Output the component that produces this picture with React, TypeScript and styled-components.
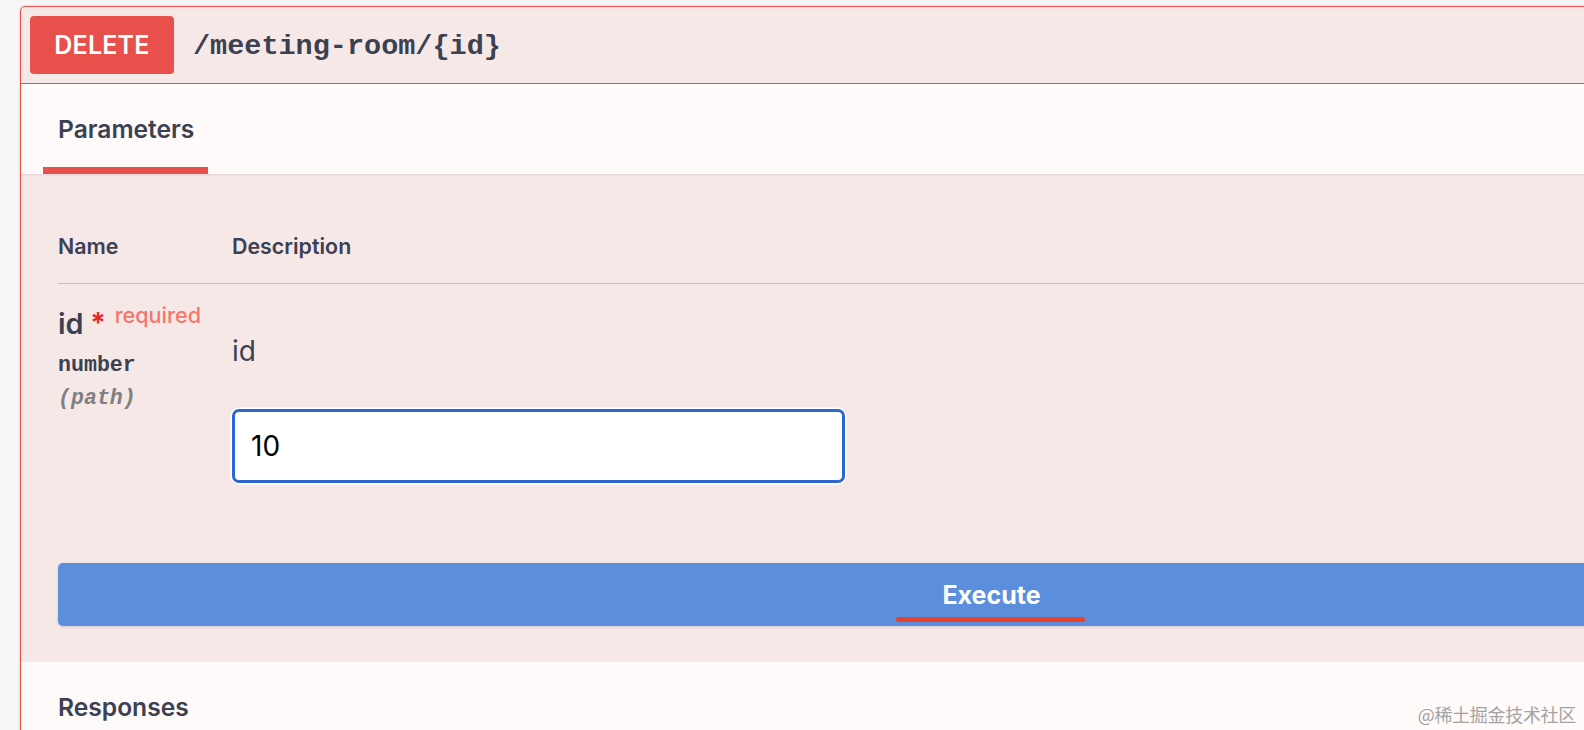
import React from "react";
import styled, { createGlobalStyle } from "styled-components";

const GlobalStyle = createGlobalStyle`
  html, body {
    margin: 0;
    padding: 0;
    background: #f7f7f7;
  }
  body {
    font-family: Inter, "Liberation Sans", Arial, sans-serif;
    color: #3b4151;
  }
  * { box-sizing: border-box; }
`;

const Page = styled.div`
  position: relative;
  width: 1584px;
  height: 730px;
  overflow: hidden;
  padding: 6px 0 0 20px;
  background: #f7f7f7;
`;

const Card = styled.section`
  width: 1942px;
  border: 1px solid #ee4f48;
  border-radius: 5px;
  background: #f7e8e8;
  box-shadow: 0 0 3px rgba(0, 0, 0, 0.19);
  overflow: hidden;
`;

const Summary = styled.header`
  display: flex;
  align-items: center;
  height: 77px;
  padding: 0 9px;
  border-bottom: 1px solid #ee4f48;
`;

const MethodBadge = styled.span`
  display: flex;
  align-items: center;
  justify-content: center;
  width: 144px;
  height: 58px;
  border-radius: 4px;
  background: #e8514b;
  color: #fff;
  font-size: 25px;
  font-weight: 600;
  letter-spacing: 0.2px;
`;

const PathText = styled.span`
  margin-left: 19px;
  font-family: "Liberation Mono", "Courier New", monospace;
  font-weight: 700;
  font-size: 28.5px;
  color: #3b4151;
  padding-top: 2px;
`;

const SectionHeader = styled.div`
  display: flex;
  height: 90px;
  padding-left: 22px;
  background: #fefaf9;
  box-shadow: 0 1px 2px rgba(0, 0, 0, 0.1);
  position: relative;
`;

const Tab = styled.div<{ $active?: boolean }>`
  padding: 30px 14px 0 15px;
  font-size: 24.6px;
  line-height: 30px;
  font-weight: 600;
  color: #3b4151;
  border-bottom: 7px solid ${(p) => (p.$active ? "#e8514b" : "transparent")};
`;

const ParamsBody = styled.div`
  padding: 59px 36px 36px 37px;
`;

const ParamGrid = styled.div`
  display: grid;
  grid-template-columns: 174px 1fr;
`;

const HeadCell = styled.div`
  font-size: 21.4px;
  line-height: 26px;
  font-weight: 600;
  color: #3b4151;
  padding-bottom: 24px;
  border-bottom: 1px solid #cdbdbf;
`;

const NameCell = styled.div`
  padding-top: 14px;
`;

const ParamName = styled.div`
  font-size: 28.8px;
  line-height: 34px;
  font-weight: 600;
  color: #3b4151;
  white-space: nowrap;
`;

const Star = styled.span`
  color: #e8261e;
  margin-left: 7px;
  font-size: 28px;
  vertical-align: 1px;
`;

const Required = styled.span`
  color: #f4776c;
  font-size: 21.6px;
  font-weight: 500;
  margin-left: 9px;
  vertical-align: 11px;
`;

const ParamType = styled.div<{ $muted?: boolean }>`
  font-family: "Liberation Mono", "Courier New", monospace;
  font-weight: 700;
  font-size: 21.6px;
  line-height: 33px;
  color: ${(p) => (p.$muted ? "#808080" : "#3b4151")};
  font-style: ${(p) => (p.$muted ? "italic" : "normal")};
  margin-top: ${(p) => (p.$muted ? "0" : "8px")};
`;

const DescCell = styled.div`
  padding-top: 50px;
`;

const DescText = styled.p`
  margin: 0;
  font-size: 28px;
  line-height: 34px;
  font-weight: 400;
  color: #3b4151;
`;

const ValueInput = styled.input`
  display: block;
  margin-top: 41px;
  width: 613px;
  height: 74px;
  padding: 0 16px;
  border: 3px solid #2d66d0;
  border-radius: 7px;
  background: #fff;
  box-shadow: 0 0 0 1.5px #fff;
  font-family: Inter, "Liberation Sans", Arial, sans-serif;
  font-size: 28px;
  color: #000;
  outline: none;
`;

const ExecuteWrapper = styled.div`
  padding-top: 80px;
`;

const ExecuteButton = styled.button`
  position: relative;
  display: block;
  width: 100%;
  height: 63px;
  border: none;
  border-radius: 5px;
  background: #5b8edc;
  color: #fff;
  font-family: Inter, "Liberation Sans", Arial, sans-serif;
  font-size: 25px;
  font-weight: 700;
  box-shadow: 0 1px 3px rgba(0, 0, 0, 0.15);
  padding: 0;
`;

const Mark = styled.span`
  position: absolute;
  left: calc(50% - 96px);
  width: 189px;
  bottom: 4px;
  height: 5px;
  border-radius: 3px;
  background: #e8412c;
`;

const ResponsesHeader = styled.div`
  background: #fefaf9;
  padding: 30px 37px 20px;
`;

const SectionTitle = styled.h4`
  margin: 0;
  font-size: 24.6px;
  line-height: 30px;
  font-weight: 600;
  color: #3b4151;
`;

const Watermark = styled.div`
  position: absolute;
  right: 8px;
  top: 702px;
  font-family: "Noto Sans CJK SC", "Liberation Sans", sans-serif;
  font-size: 18px;
  line-height: 24px;
  color: #a3a3a3;
  letter-spacing: -0.3px;
`;

export default function App() {
  return (
    <>
      <GlobalStyle />
      <Page>
        <Card>
          <Summary>
            <MethodBadge>DELETE</MethodBadge>
            <PathText>/meeting-room/{"{id}"}</PathText>
          </Summary>
          <SectionHeader>
            <Tab $active>Parameters</Tab>
          </SectionHeader>
          <ParamsBody>
            <ParamGrid>
              <HeadCell>Name</HeadCell>
              <HeadCell>Description</HeadCell>
              <NameCell>
                <ParamName>
                  id<Star>*</Star>
                  <Required>required</Required>
                </ParamName>
                <ParamType>number</ParamType>
                <ParamType $muted>(path)</ParamType>
              </NameCell>
              <DescCell>
                <DescText>id</DescText>
                <ValueInput defaultValue="10" />
              </DescCell>
            </ParamGrid>
            <ExecuteWrapper>
              <ExecuteButton>
                Execute
                <Mark />
              </ExecuteButton>
            </ExecuteWrapper>
          </ParamsBody>
          <ResponsesHeader>
            <SectionTitle>Responses</SectionTitle>
          </ResponsesHeader>
        </Card>
        <Watermark>@稀土掘金技术社区</Watermark>
      </Page>
    </>
  );
}
